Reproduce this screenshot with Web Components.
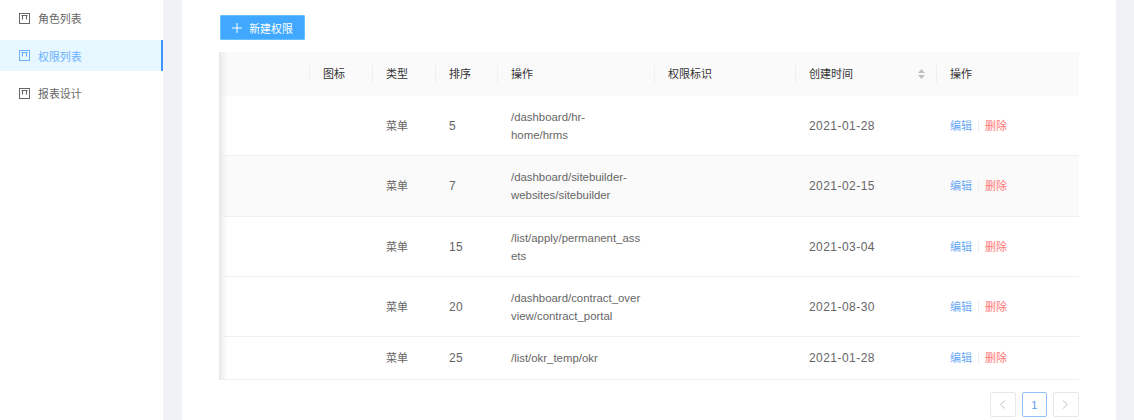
<!DOCTYPE html>
<html lang="zh"><head><meta charset="utf-8"><title>权限列表</title>
<style>
html,body{margin:0;padding:0;height:420px;overflow:hidden;background:#f0f2f5;font-family:"Liberation Sans","Noto Sans CJK SC",sans-serif;font-size:11px;color:#666}
</style></head><body>
<app-shell>
  <side-menu slot="side">
    <menu-item>角色列表</menu-item>
    <menu-item active>权限列表</menu-item>
    <menu-item>报表设计</menu-item>
  </side-menu>
  <content-card>
    <add-button>新建权限</add-button>
    <perm-table></perm-table>
    <page-nav></page-nav>
  </content-card>
</app-shell>
<script>
function def(name, css, html, init){
  customElements.define(name, class extends HTMLElement{
    constructor(){super();const s=this.attachShadow({mode:'open'});s.innerHTML='<style>'+css+'</style>'+html; if(init) init(s,this);}
  });
}
def('app-shell',`:host{display:grid;grid-template-columns:163px 934px;column-gap:19px;height:420px}`,`<slot name="side"></slot><slot></slot>`);
def('side-menu',`:host{display:flex;flex-direction:column;gap:6.5px;background:#fff;padding-top:2.5px;height:417.5px}`,`<slot></slot>`);
def('menu-item',`:host{display:flex;align-items:center;gap:8px;height:31px;padding-left:19px;box-sizing:border-box;color:#666;font-size:10.9px}
:host([active]){background:#e6f7ff;color:#69b1ff;border-right:2px solid #4096ff}
svg{width:11px;height:11px;flex:none}`,
`<svg viewBox="0 0 11 11" fill="none" stroke="currentColor"><rect x=".5" y=".5" width="10" height="10"/><path d="M3.5 2.5v4M7.5 2.5v4M2.5 2.5h6" stroke-width="1.1"/></svg><slot></slot>`);
def('content-card',`:host{display:flex;flex-direction:column;align-items:flex-start;background:#fff;padding:15px 37px 0;box-sizing:border-box;height:420px}`,`<slot></slot>`);
def('add-button',`:host{display:flex;align-items:center;gap:7px;box-sizing:border-box;width:85px;height:25px;margin-left:1px;justify-content:center;background:#40a9ff;border:1px solid #69c0ff;border-radius:1px;color:#fff;font-size:10.9px}
svg{width:10px;height:10px}`,
`<svg viewBox="0 0 10 10" stroke="#fff" stroke-width="1"><path d="M5 0v10M0 5h10"/></svg><slot></slot>`);
const COLS='91px 63px 63px 62px 157px 141px 141px 142px';
const ROWS=[['5','/dashboard/hr-<br>home/hrms','2021-01-28',60],['7','/dashboard/sitebuilder-<br>websites/sitebuilder','2021-02-15',61],['15','/list/apply/permanent_ass<br>ets','2021-03-04',60],['20','/dashboard/contract_over<br>view/contract_portal','2021-08-30',60],['25','/list/okr_temp/okr','2021-01-28',43]];
def('perm-table',`:host{display:block;position:relative;width:860px;margin-top:12px}
.row{display:grid;grid-template-columns:${COLS};border-bottom:1px solid #f0f0f0;box-sizing:border-box;align-items:center}
.head{height:44px;background:#fafafa;color:#333;border-bottom:0}
.alt{background:#fafafa}
.c{padding:0 13px;box-sizing:border-box;position:relative;line-height:18px;min-width:0;white-space:nowrap}
.head .c{display:flex;align-items:center;height:44px}
.head .sep::before{content:"";position:absolute;left:-1px;top:13px;height:18px;width:1px;background:#f0f0f0}
.num{font-size:12px;letter-spacing:.45px}
.path{font-size:11.4px}
.sort{margin-left:auto;margin-right:-1px;display:block}
.act{display:flex;align-items:center}
.edit{color:#69a8f5}.del{color:#ff7875}
.bar{width:1px;height:12px;background:#f0f0f0;margin:0 6px}
.shadow{position:absolute;left:0;top:0;bottom:0;width:8px;background:linear-gradient(to right,#e8e8e8,rgba(255,255,255,0))}`,
`<div id="t"></div><div class="shadow"></div>`,
(s)=>{
  const heads=['','图标','类型','排序','操作','权限标识','创建时间','操作'];
  let h='<div class="row head">'+heads.map((x,i)=>{
    const sort=i==6?'<svg class="sort" width="7" height="10" viewBox="0 0 7 10" fill="#bfbfbf"><path d="M3.5 0L7 4H0zM3.5 10L0 6h7z"/></svg>':'';
    return `<div class="c${i?' sep':''}">${x}${sort}</div>`;
  }).join('')+'</div>';
  ROWS.forEach((r,i)=>{
    h+=`<div class="row${i==1?' alt':''}" style="height:${r[3]}px"><div class="c"></div><div class="c"></div><div class="c">菜单</div><div class="c num">${r[0]}</div><div class="c path">${r[1]}</div><div class="c"></div><div class="c num">${r[2]}</div><div class="c act"><span class="edit">编辑</span><span class="bar"></span><span class="del">删除</span></div></div>`;
  });
  s.getElementById('t').innerHTML=h;
});
def('page-nav',`:host{display:flex;gap:6px;align-self:flex-end;margin:12px .5px 0 0}
.b{width:25.5px;height:25px;box-sizing:border-box;border:1px solid #e8e8e8;border-radius:2px;display:flex;align-items:center;justify-content:center;color:#c4c4c4;font-size:11px}
.on{border-color:#91bdf9;color:#5a9cf5}`,
`<div class="b"><svg width="7" height="9" viewBox="0 0 7 9" fill="none" stroke="currentColor"><path d="M6 .5L1.5 4.5 6 8.5"/></svg></div><div class="b on">1</div><div class="b"><svg width="7" height="9" viewBox="0 0 7 9" fill="none" stroke="currentColor"><path d="M1 .5l4.5 4L1 8.5"/></svg></div>`);
</script>
</body></html>
